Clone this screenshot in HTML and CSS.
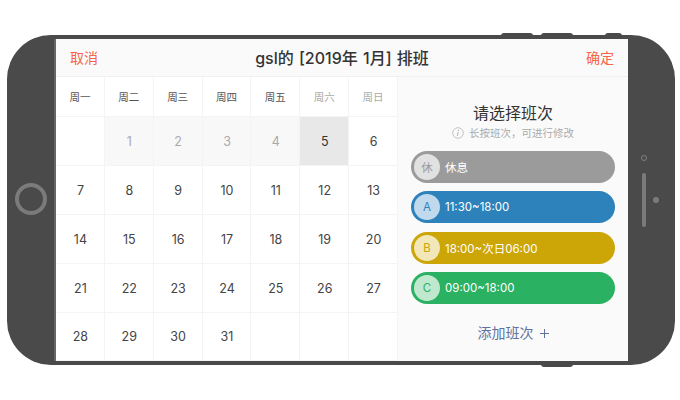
FILE: index.html
```html
<!DOCTYPE html>
<html lang="zh">
<head>
<meta charset="utf-8">
<title>排班</title>
<link rel="stylesheet" href="styles.css">
</head>
<body>
<div class="phone">
  <span class="hw hw-top hw-a"></span>
  <span class="hw hw-top hw-b"></span>
  <span class="hw hw-top hw-c"></span>
  <span class="hw hw-bottom"></span>
  <span class="home"></span>
  <span class="cam"></span>
  <span class="speaker"></span>
  <span class="dot"></span>
  <div class="screen">
    <header class="bar">
      <span class="action">取消</span>
      <span class="title">gsl的 [2019年 1月] 排班</span>
      <span class="action">确定</span>
    </header>
    <div class="body">
      <div class="calendar">
        <div class="wk">周一</div><div class="wk">周二</div><div class="wk">周三</div><div class="wk">周四</div><div class="wk">周五</div><div class="wk muted">周六</div><div class="wk muted">周日</div>
        <div class="day"></div><div class="day past">1</div><div class="day past">2</div><div class="day past">3</div><div class="day past">4</div><div class="day today">5</div><div class="day">6</div>
        <div class="day">7</div><div class="day">8</div><div class="day">9</div><div class="day">10</div><div class="day">11</div><div class="day">12</div><div class="day">13</div>
        <div class="day">14</div><div class="day">15</div><div class="day">16</div><div class="day">17</div><div class="day">18</div><div class="day">19</div><div class="day">20</div>
        <div class="day">21</div><div class="day">22</div><div class="day">23</div><div class="day">24</div><div class="day">25</div><div class="day">26</div><div class="day">27</div>
        <div class="day">28</div><div class="day">29</div><div class="day">30</div><div class="day">31</div><div class="day"></div><div class="day"></div><div class="day"></div>
      </div>
      <aside class="panel">
        <h2 class="panel-title">请选择班次</h2>
        <p class="hint">
          <svg class="info" viewBox="0 0 12 12" width="12" height="12" aria-hidden="true"><circle cx="6" cy="6" r="5.3" fill="none" stroke="#b5b5b5" stroke-width="0.8"/><circle cx="6.4" cy="3.4" r="0.7" fill="#b5b5b5"/><path d="M6.2 5 L5.4 9" stroke="#b5b5b5" stroke-width="1" fill="none"/></svg>
          <span>长按班次，可进行修改</span>
        </p>
        <div class="shifts">
          <div class="pill gray"><span class="badge">休</span><span>休息</span></div>
          <div class="pill blue"><span class="badge">A</span><span>11:30~18:00</span></div>
          <div class="pill gold"><span class="badge">B</span><span>18:00~次日06:00</span></div>
          <div class="pill green"><span class="badge">C</span><span>09:00~18:00</span></div>
        </div>
        <div class="add">
          <span>添加班次</span>
          <svg viewBox="0 0 9 9" width="9" height="9" aria-hidden="true"><path d="M4.5 0V9M0 4.5H9" stroke="#5f719e" stroke-width="1" fill="none"/></svg>
        </div>
      </aside>
    </div>
  </div>
</div>
</body>
</html>
```
FILE: styles.css
```css
* { box-sizing: border-box; }
html, body { margin: 0; padding: 0; background: #fff; }
body {
  width: 680px;
  height: 400px;
  padding: 35px 5px 0 7px;
  overflow: hidden;
  font-family: Inter, "Noto Sans CJK SC", sans-serif;
}
.phone {
  position: relative;
  width: 668px;
  height: 330px;
  padding: 4px 47px 4px 49px;
  background: #4a4a4a;
  border-radius: 44px;
}
.hw { position: absolute; height: 3px; background: #4a4a4a; }
.hw-top { top: -2px; border-radius: 3px 3px 0 0; }
.hw-a { left: 494px; width: 32px; }
.hw-b { left: 534px; width: 32px; }
.hw-c { left: 598px; width: 17px; }
.hw-bottom { bottom: -2px; left: 534px; width: 32px; border-radius: 0 0 3px 3px; }
.home {
  position: absolute;
  left: 8px;
  top: 148px;
  width: 32px;
  height: 32px;
  border: 4px solid #7b7b7b;
  border-radius: 50%;
}
.cam {
  position: absolute;
  left: 634px;
  top: 120px;
  width: 6px;
  height: 6px;
  border: 1.5px solid #808080;
  border-radius: 50%;
}
.speaker {
  position: absolute;
  left: 635px;
  top: 138px;
  width: 4px;
  height: 54px;
  background: #7b7b7b;
  border-radius: 2px;
}
.dot {
  position: absolute;
  left: 646px;
  top: 162px;
  width: 6px;
  height: 6px;
  background: #7b7b7b;
  border-radius: 50%;
}
.screen {
  width: 572px;
  height: 322px;
  background: #fff;
  box-shadow: -2px 0 0 #666;
}
.bar {
  display: flex;
  align-items: center;
  justify-content: space-between;
  height: 38px;
  padding: 0 14px 2px;
  background: #fafafa;
  border-bottom: 1px solid #f0f0f0;
}
.action { font-size: 14px; color: #f4664a; }
.title { font-size: 16px; font-weight: 500; color: #333; word-spacing: 1px; }
.body { display: flex; height: 284px; }
.calendar {
  display: grid;
  flex: 0 0 342px;
  grid-template-columns: repeat(7, 1fr);
  grid-template-rows: 40px repeat(4, 49px) 48px;
}
.wk, .day {
  display: flex;
  align-items: center;
  justify-content: center;
  border-right: 1px solid #f4f4f4;
  border-bottom: 1px solid #f4f4f4;
}
.wk { font-size: 10.5px; color: #555; }
.wk.muted { color: #aaa; }
.day { padding-left: 1px; font-size: 12.5px; color: #444; }
.day.past { background: #f8f8f8; color: #aaa; }
.day.today { background: #e8e8e8; color: #333; }
.panel {
  display: flex;
  flex: 1;
  flex-direction: column;
  align-items: center;
  padding-top: 25px;
  background: #fafafa;
}
.panel-title {
  margin: 0;
  font-size: 16px;
  font-weight: 400;
  line-height: 22px;
  color: #333;
}
.hint {
  display: flex;
  align-items: center;
  gap: 5px;
  margin: 0;
  height: 17px;
  font-size: 10.5px;
  color: #aaa;
}
.shifts {
  display: flex;
  flex-direction: column;
  gap: 8.4px;
  margin-top: 10px;
}
.pill {
  display: flex;
  align-items: center;
  gap: 5px;
  width: 204px;
  height: 32px;
  padding-left: 3px;
  border-radius: 16px;
  font-size: 11.5px;
  color: #fff;
}
.badge {
  display: flex;
  align-items: center;
  justify-content: center;
  width: 26px;
  height: 26px;
  border-radius: 50%;
  font-size: 11.5px;
}
.gray { background: #9b9b9b; }
.gray .badge { background: #e1e1e1; color: #9b9b9b; }
.blue { background: #2d82bb; }
.blue .badge { background: #c0d9ec; color: #2d82bb; }
.gold { background: #cca507; }
.gold .badge { background: #f2e7b8; color: #cca507; }
.green { background: #2ab161; }
.green .badge { background: #bfe8cf; color: #2ab161; }
.add {
  display: flex;
  align-items: center;
  gap: 6px;
  margin-top: 19px;
  font-size: 14px;
  line-height: 20px;
  color: #5f719e;
}
```
